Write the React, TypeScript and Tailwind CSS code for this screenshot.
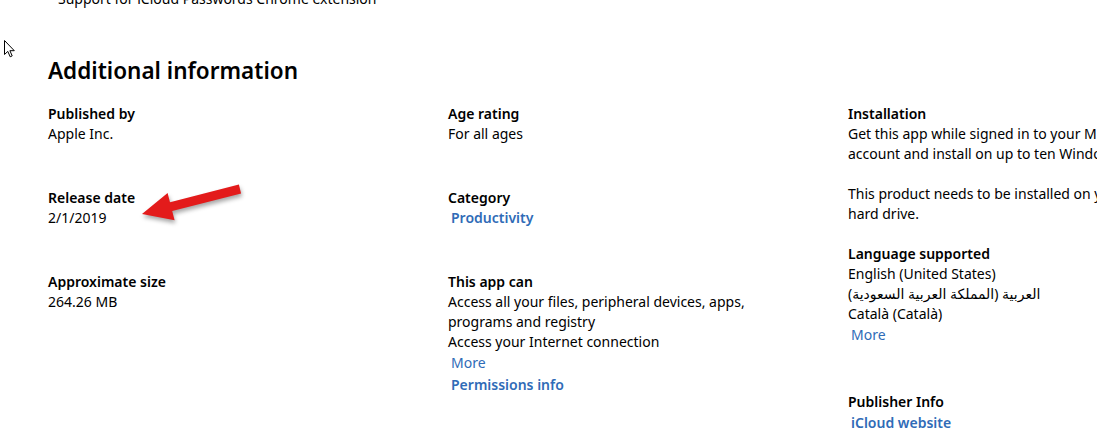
import React from "react";

const Label = ({ children }: { children: React.ReactNode }) => (
  <div className="h-5 leading-5 font-semibold text-black whitespace-nowrap">{children}</div>
);
const Line = ({ children }: { children?: React.ReactNode }) => (
  <div className="h-5 leading-5 text-black whitespace-nowrap">{children}</div>
);
const Link = ({ children, bold }: { children: React.ReactNode; bold?: boolean }) => (
  <div className={`h-[22px] leading-[22px] pl-[3px] text-[#2f6bb7] whitespace-nowrap ${bold ? "font-semibold" : ""}`}>
    {children}
  </div>
);

export default function App() {
  return (
    <div
      className="relative w-[1097px] h-[428px] overflow-hidden bg-white text-[14px]"
      style={{ fontFamily: '"Segoe UI", "Noto Sans", "DejaVu Sans", sans-serif' }}
    >
      <div className="pl-[58px] -mt-[11px] h-5 leading-5 text-black whitespace-nowrap">
        Support for iCloud Passwords Chrome extension
      </div>

      <div className="pl-12">
        <h2 className="mt-[46px] h-8 leading-8 text-[22.5px] font-semibold text-black">Additional information</h2>

        <div className="mt-[17px] grid grid-cols-[400px_400px_400px]">
          <div className="flex flex-col">
            <div>
              <Label>Published by</Label>
              <Line>Apple Inc.</Line>
            </div>
            <div className="mt-11">
              <Label>Release date</Label>
              <Line>2/1/2019</Line>
            </div>
            <div className="mt-11">
              <Label>Approximate size</Label>
              <Line>264.26 MB</Line>
            </div>
          </div>

          <div className="flex flex-col">
            <div>
              <Label>Age rating</Label>
              <Line>For all ages</Line>
            </div>
            <div className="mt-11">
              <Label>Category</Label>
              <div className="h-5 leading-5 pl-[3px] text-[#2f6bb7] font-semibold">Productivity</div>
            </div>
            <div className="mt-11">
              <Label>This app can</Label>
              <Line>Access all your files, peripheral devices, apps,</Line>
              <Line>programs and registry</Line>
              <Line>Access your Internet connection</Line>
              <Link>More</Link>
              <Link bold>Permissions info</Link>
            </div>
          </div>

          <div className="flex flex-col">
            <div>
              <Label>Installation</Label>
              <Line>Get this app while signed in to your Microsoft</Line>
              <Line>account and install on up to ten Windows 10 devices.</Line>
              <Line></Line>
              <Line>This product needs to be installed on your internal</Line>
              <Line>hard drive.</Line>
            </div>
            <div className="mt-5">
              <Label>Language supported</Label>
              <Line>English (United States)</Line>
              <Line>
                <span dir="rtl">العربية (المملكة العربية السعودية)</span>
              </Line>
              <Line>Català (Català)</Line>
              <Link>More</Link>
            </div>
            <div className="mt-[46px]">
              <Label>Publisher Info</Label>
              <Link bold>iCloud website</Link>
            </div>
          </div>
        </div>
      </div>

      {/* mouse cursor */}
      <svg className="absolute left-[4px] top-[40px]" width="12" height="19" viewBox="0 0 12 19">
        <path
          d="M0.5 0.5 L0.5 14.5 L3.8 11.4 L6.2 16.8 L8.2 15.9 L5.9 10.7 L10.3 10.7 Z"
          fill="white"
          stroke="black"
          strokeWidth="1"
          strokeLinejoin="miter"
        />
      </svg>

      {/* red annotation arrow */}
      <svg
        className="absolute left-0 top-0 pointer-events-none"
        width="300"
        height="260"
        viewBox="0 0 300 260"
        style={{ filter: "drop-shadow(1px 3px 2px rgba(0,0,0,0.35))" }}
      >
        <polygon
          points="238.9,184.6 170,202.2 167.6,193 142,214 174.6,220.2 172.2,211 241.1,193.4"
          fill="#e31b1b"
        />
      </svg>
    </div>
  );
}
